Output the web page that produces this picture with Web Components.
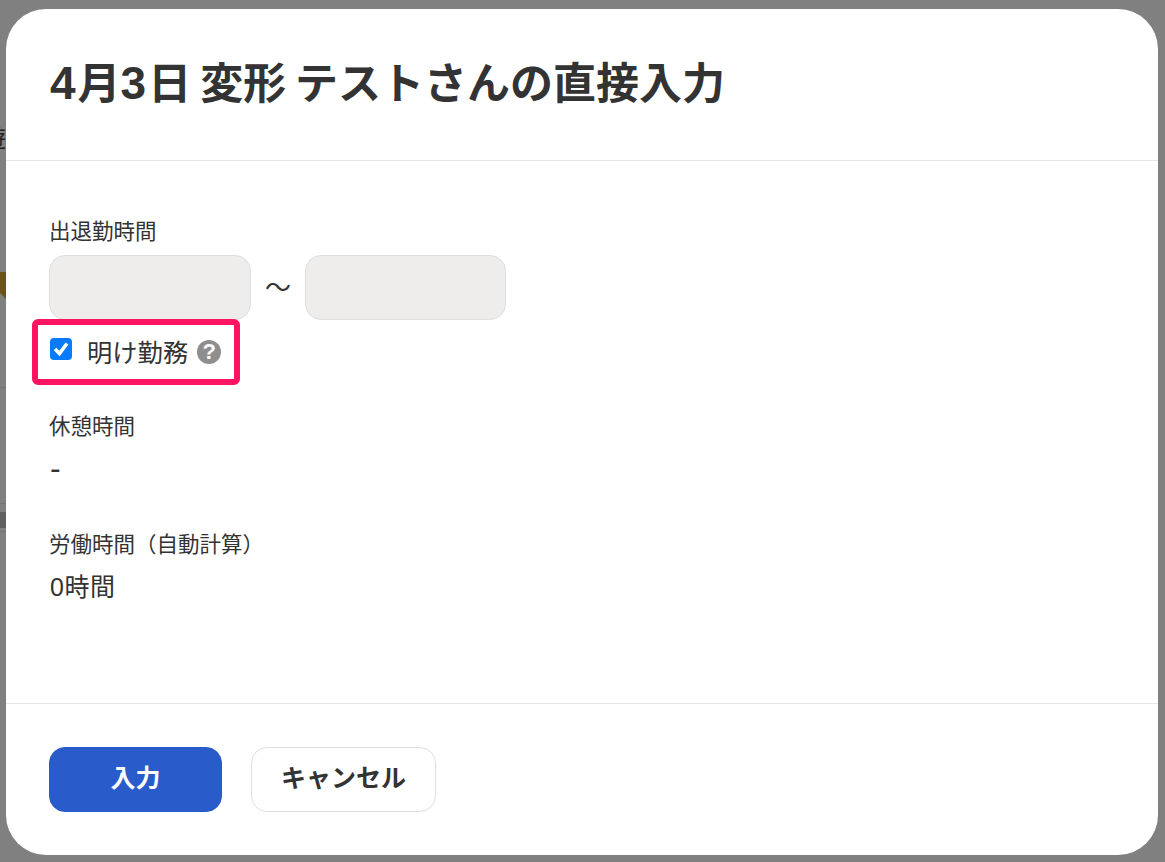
<!DOCTYPE html>
<html lang="ja">
<head>
<meta charset="utf-8">
<title>直接入力</title>
<style>
	html, body { margin: 0; height: 100%; }
	body {
		font-family: "Liberation Sans", "Noto Sans CJK JP", sans-serif;
		color: #333;
		background: #808080;
	}
	/* digits in the title run larger than the kana around them */
	.num { font-size: 46px; letter-spacing: 2px; }
</style>
</head>
<body>
<attendance-page>
	<entry-modal>
		<span slot="title"><span class="num">4</span>月<span class="num">3</span>日 変形 テストさんの直接入力</span>
		<field-group label="出退勤時間" flush>
			<time-range></time-range>
			<overnight-check>明け勤務</overnight-check>
		</field-group>
		<field-group label="休憩時間" value="-" dash></field-group>
		<field-group label="労働時間（自動計算）" value="0時間"></field-group>
		<action-button slot="footer" primary>入力</action-button>
		<action-button slot="footer">キャンセル</action-button>
	</entry-modal>
</attendance-page>

<script>
/* page behind the overlay, only a sliver shows at the left edge */
class AttendancePage extends HTMLElement {
	constructor() {
		super();
		this.attachShadow({ mode: "open" });
		this.shadowRoot.innerHTML = `
      <style>
        :host {
          display: flex;
          position: relative;
          box-sizing: border-box;
          width: 100%;
          height: 862px;
          padding: 9px 7px 7px 6px;
          overflow: hidden;
        }
        .behind { position: absolute; left: 0; width: 6px; }
        .glyph { top: 124px; height: 30px; overflow: hidden; direction: rtl; font-size: 24px; line-height: 30px; color: #222; }
        .brown { top: 272px; height: 27px; background: #6b5220; clip-path: polygon(0 0, 100% 0, 100% 100%, 0 78%); }
        .line1 { top: 387px; height: 1px; background: #767676; }
        .line2 { top: 503px; height: 1px; background: #767676; }
        .bar { top: 512px; height: 16px; background: #606060; }
        .line3 { top: 531px; height: 1px; background: #767676; }
      </style>
      <div class="behind glyph">遊</div>
      <div class="behind brown"></div>
      <div class="behind line1"></div>
      <div class="behind line2"></div>
      <div class="behind bar"></div>
      <div class="behind line3"></div>
      <slot></slot>
    `;
	}
}

class EntryModal extends HTMLElement {
	constructor() {
		super();
		this.attachShadow({ mode: "open" });
		this.shadowRoot.innerHTML = `
      <style>
        :host {
          display: flex;
          flex-direction: column;
          position: relative;
          flex: 1;
          background: #fff;
          border-radius: 40px;
        }
        header {
          display: flex;
          align-items: center;
          height: 152px;
          padding: 0 44px 10px;
          box-sizing: border-box;
          border-bottom: 1px solid #e6e6e6;
          font-size: 43px;
          font-weight: 700;
          word-spacing: -3px;
          white-space: nowrap;
        }
        main {
          flex: 1;
          display: flex;
          flex-direction: column;
          gap: 45px;
          padding: 57px 43px 0;
        }
        footer {
          display: flex;
          gap: 29px;
          height: 152px;
          box-sizing: border-box;
          padding: 43px 43px 0;
          border-top: 1px solid #e6e6e6;
        }
      </style>
      <header><slot name="title"></slot></header>
      <main><slot></slot></main>
      <footer><slot name="footer"></slot></footer>
    `;
	}
}

class FieldGroup extends HTMLElement {
	constructor() {
		super();
		this.attachShadow({ mode: "open" });
		const value = this.getAttribute("value");
		this.shadowRoot.innerHTML = `
      <style>
        :host { display: block; }
        :host([flush]) { margin-bottom: -17px; }
        .label { font-size: 21.5px; line-height: 28px; margin-bottom: 9px; }
        .value { font-size: 25px; line-height: 34px; padding: 2px 0 0 1px; letter-spacing: 0.5px; }
        :host([dash]) .value { font-size: 32px; line-height: 32px; padding-top: 2px; padding-bottom: 2px; }
      </style>
      <div class="label">${this.getAttribute("label")}</div>
      ${value !== null ? `<div class="value">${value}</div>` : ""}
      <slot></slot>
    `;
	}
}

class TimeRange extends HTMLElement {
	constructor() {
		super();
		this.attachShadow({ mode: "open" });
		this.shadowRoot.innerHTML = `
      <style>
        :host { display: flex; align-items: center; gap: 13px; }
        input {
          width: 202px;
          height: 65px;
          box-sizing: border-box;
          padding: 0 12px;
          background: #eeedec;
          border: 1px solid #dedede;
          border-radius: 16px;
          font: inherit;
        }
        input:last-child { width: 201px; }
        span { font-size: 26px; line-height: 1; width: 28px; text-align: center; }
      </style>
      <input type="text" disabled>
      <span>〜</span>
      <input type="text" disabled>
    `;
	}
}

class OvernightCheck extends HTMLElement {
	constructor() {
		super();
		this.attachShadow({ mode: "open" });
		this.shadowRoot.innerHTML = `
      <style>
        :host {
          display: flex;
          align-items: center;
          position: relative;
          box-sizing: border-box;
          height: 65px;
          padding: 0 0 4px 1px;
          font-size: 25.3px;
        }
        .box {
          display: flex;
          width: 22px;
          height: 22px;
          margin-top: -3px;
          margin-right: 15px;
          background: #0a7bff;
          border-radius: 4px;
        }
        .help {
          display: flex;
          align-items: center;
          justify-content: center;
          width: 24px;
          height: 24px;
          margin-top: 3px;
          margin-left: 9px;
          border-radius: 50%;
          background: #8e8e8e;
          color: #fff;
          font-size: 22px;
          font-weight: 700;
        }
        .mark {
          position: absolute;
          left: -17px;
          top: -1px;
          width: 208px;
          height: 66px;
          box-sizing: border-box;
          border: 6px solid #ff1464;
          border-radius: 6px;
        }
      </style>
      <span class="box">
        <svg viewBox="0 0 22 22" width="22" height="22"><path d="M5 11l4.5 4.5L17 5.5" fill="none" stroke="#fff" stroke-width="3.6"/></svg>
      </span>
      <slot></slot>
      <span class="help">?</span>
      <div class="mark"></div>
    `;
	}
}

class ActionButton extends HTMLElement {
	constructor() {
		super();
		this.attachShadow({ mode: "open" });
		this.shadowRoot.innerHTML = `
      <style>
        :host {
          display: flex;
          align-items: center;
          justify-content: center;
          box-sizing: border-box;
          height: 65px;
          width: 185px;
          padding-bottom: 8px;
          border: 1px solid #dedede;
          border-radius: 16px;
          background: #fff;
          color: #333;
          font-size: 25px;
          font-weight: 700;
        }
        :host([primary]) {
          width: 173px;
          background: #2a5bcb;
          border-color: #2a5bcb;
          color: #fff;
        }
      </style>
      <slot></slot>
    `;
	}
}

customElements.define("attendance-page", AttendancePage);
customElements.define("entry-modal", EntryModal);
customElements.define("field-group", FieldGroup);
customElements.define("time-range", TimeRange);
customElements.define("overnight-check", OvernightCheck);
customElements.define("action-button", ActionButton);
</script>
</body>
</html>
